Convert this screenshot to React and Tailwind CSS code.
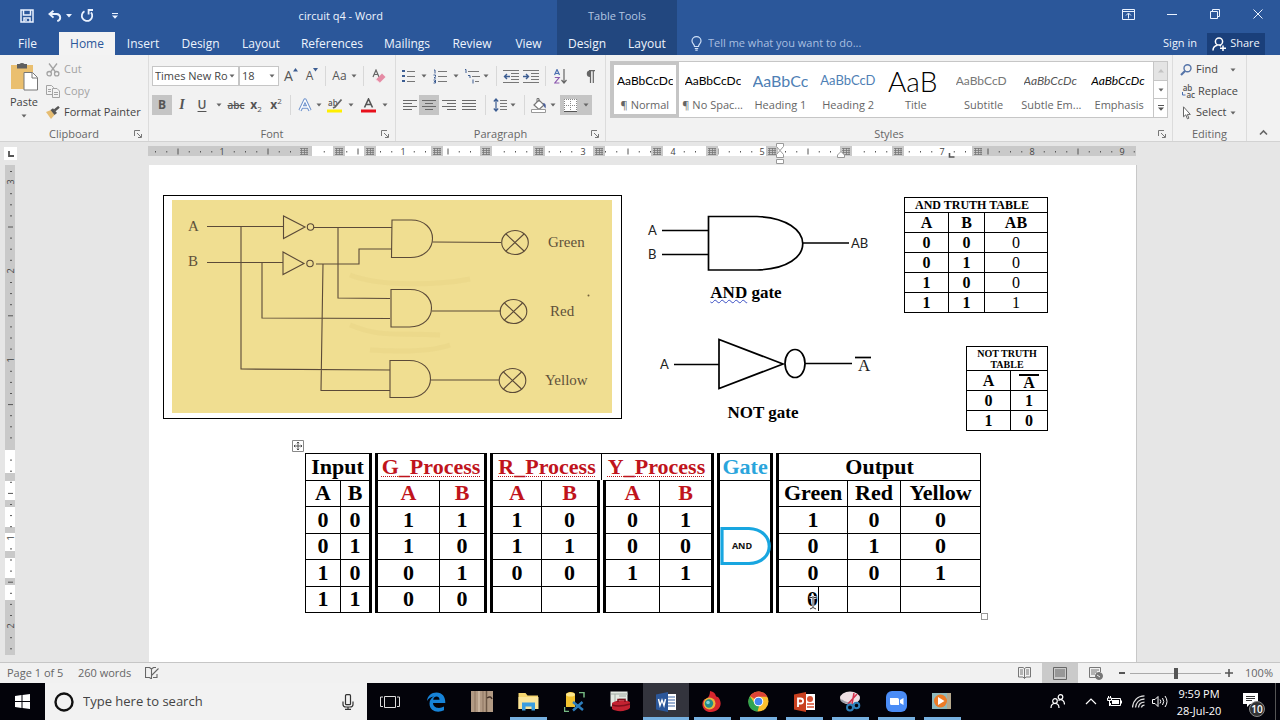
import React from "react";

const Arrow = ({ className = "" }) => (
  <svg className={"shrink-0 " + className} width="6" height="4" viewBox="0 0 6 4" aria-hidden="true">
    <path d="M0.5 0.5h5L3 3.4z" fill="#666" />
  </svg>
);

const Sep = ({ className = "mx-1" }) => <span className={"h-5 w-px shrink-0 bg-[#d8d8d8] " + className} />;

const Tool = ({ label, className = "w-5", children, on }) => (
  <button
    type="button"
    aria-label={label}
    className={"flex h-5 shrink-0 items-center justify-center " + (on ? "bg-[#c5c5c5] " : "") + className}
  >
    {children}
  </button>
);

const Drop = ({ label, className = "w-2" }) => (
  <Tool label={label} className={className}>
    <Arrow />
  </Tool>
);

const Lines = ({ rows, size = 14, color = "#6a6a6a" }) => (
  <svg width={size} height="13" viewBox="0 0 14 13" stroke={color} fill="none">
    {rows.map(([a, b], i) => (
      <path key={i} d={`M${a} ${i * 3 + 1.5}H${b}`} />
    ))}
  </svg>
);

const Launcher = ({ label }) => (
  <button type="button" aria-label={label} className="absolute right-1 flex h-3 w-3 items-center justify-center">
    <svg width="8" height="8" viewBox="0 0 8 8" fill="none" stroke="#777">
      <path d="M0.5 6V0.5H6M3 3l4 4M7.5 4v3.5H4" />
    </svg>
  </button>
);

const Group = ({ title, className, children, launcher }) => (
  <section aria-label={title} className={"flex shrink-0 flex-col border-r border-[#dcdcdc] " + className}>
    <div className="h-[72px]">{children}</div>
    <div className="relative flex h-[14px] items-center justify-center text-[11px] leading-[14px] text-[#666]">
      {title}
      {launcher && <Launcher label={title + " settings"} />}
    </div>
  </section>
);

const Tab = ({ className, children }) => (
  <a href="#" className={"flex h-[23px] shrink-0 items-center justify-center text-[12px] " + className}>
    {children}
  </a>
);

function Header() {
  return (
    <header className="flex h-[55px] shrink-0 bg-[#2b579a] text-[#eef4fd]">
      <div className="flex w-[557px] shrink-0 flex-col">
        <div className="flex h-8 items-center pl-[15px]">
          <button type="button" aria-label="Save" className="flex w-6 justify-center">
            <svg width="14" height="14" viewBox="0 0 14 14" fill="none" stroke="#eaf2ff" strokeWidth="1.5">
              <path d="M1 1h12v12H1zM3.5 1v5h7V1M4 13V9h6v4M6 10v2" />
            </svg>
          </button>
          <button type="button" aria-label="Undo" className="ml-2 flex w-4 justify-center">
            <svg width="14" height="12" viewBox="0 0 14 12" fill="none" stroke="#eaf2ff" strokeWidth="1.9">
              <path d="M5.5 0.8L1.5 4l4 3.6M2 4h6.5c4.5 0.3 5 5.6 0.8 7.2" />
            </svg>
          </button>
          <button type="button" aria-label="Undo list" className="flex w-3 justify-center">
            <svg width="6" height="4"><path d="M0 0h6L3 3.5z" fill="#eaf2ff" /></svg>
          </button>
          <button type="button" aria-label="Repeat" className="ml-1 flex w-4 justify-center">
            <svg width="14" height="14" viewBox="0 0 14 14" fill="none" stroke="#eaf2ff" strokeWidth="1.8">
              <path d="M4.5 2.2A5.2 5.2 0 1 0 11 3.4M13 1H8.6v4.6" />
            </svg>
          </button>
          <button type="button" aria-label="Customize toolbar" className="ml-3 flex w-4 justify-center">
            <svg width="6" height="6"><path d="M0 0h6v1H0zM0 2.5h6L3 5.8z" fill="#eaf2ff" /></svg>
          </button>
          <h1 className="ml-auto mr-[174px] text-[11px]">circuit q4 - Word</h1>
        </div>
        <nav aria-label="Ribbon tabs" className="flex">
          <Tab className="mr-1 w-[55px]">File</Tab>
          <Tab className="w-14 bg-[#f3f3f3] text-[#2b579a]">Home</Tab>
          <Tab className="w-14">Insert</Tab>
          <Tab className="w-[59px]">Design</Tab>
          <Tab className="w-[62px]">Layout</Tab>
          <Tab className="w-20">References</Tab>
          <Tab className="w-[70px]">Mailings</Tab>
          <Tab className="w-[60px]">Review</Tab>
          <Tab className="w-[53px]">View</Tab>
        </nav>
      </div>
      <div className="flex w-[120px] shrink-0 flex-col bg-[#22477f]">
        <div className="flex h-8 items-center justify-center text-[11px] text-[#b3c6e2]">Table Tools</div>
        <div className="flex">
          <Tab className="w-[60px]">Design</Tab>
          <Tab className="w-[60px]">Layout</Tab>
        </div>
      </div>
      <div className="flex min-w-0 flex-1 flex-col">
        <div className="flex h-8 items-center justify-end pb-1">
          <button type="button" aria-label="Ribbon display options" className="flex w-11 justify-center">
            <svg width="13" height="11" viewBox="0 0 13 11" fill="none" stroke="#eaf2ff">
              <path d="M0.5 0.5h12v10H0.5zM0.5 2.5h12M6.500 9.500V4.500M4 6.500L6.500 4l2.500 2.500" />
            </svg>
          </button>
          <button type="button" aria-label="Minimize" className="flex w-11 justify-center">
            <svg width="10" height="10"><path d="M0 5.500h10" stroke="#eaf2ff" /></svg>
          </button>
          <button type="button" aria-label="Restore" className="flex w-[42px] justify-center">
            <svg width="10" height="10" viewBox="0 0 10 10" fill="none" stroke="#eaf2ff">
              <path d="M0.500 2.500h7v7h-7zM2.500 2.500v-2h7v7h-2" />
            </svg>
          </button>
          <button type="button" aria-label="Close" className="flex w-[44px] justify-center">
            <svg width="10" height="10"><path d="M0.500 0.500l9 9M9.500 0.500l-9 9" stroke="#eaf2ff" /></svg>
          </button>
        </div>
        <div className="flex h-[23px] items-center pl-[14px] pr-[15px] text-[12px]">
          <svg width="11" height="15" viewBox="0 0 11 15" fill="none" stroke="#cfe0f7" strokeWidth="1.2">
            <path d="M3.500 10.500C3.500 8 1 7.500 1 4.900a4.500 4.300 0 0 1 9 0C10 7.500 7.500 8 7.500 10.500zM3.800 12.500h3.400M4.300 14.200h2.400" />
          </svg>
          <input
            aria-label="Tell me what you want to do"
            placeholder="Tell me what you want to do..."
            className="ml-[6px] w-52 bg-transparent text-[11px] outline-none placeholder:text-[#a9bfe0]"
          />
          <a href="#" className="ml-auto mr-[10px] text-[11px]">Sign in</a>
          <button type="button" className="flex h-[22px] w-[58px] items-center justify-center gap-1 bg-[#1a3f7a] text-[11px]">
            <svg width="14" height="14" viewBox="0 0 14 14" fill="none" stroke="#fff" strokeWidth="1.5">
              <circle cx="7" cy="4.500" r="3.600" />
              <path d="M1 13.500c0-3 1.800-4.700 4.500-5.200M7.500 8.200l1.500 1M11 8.500v5.500M8 11.200h6" />
            </svg>
            Share
          </button>
        </div>
      </div>
    </header>
  );
}

function Clipboard() {
  return (
    <div className="flex h-full pl-2">
      <button type="button" className="flex w-8 flex-col items-center pt-[7px] text-[11px] leading-4 text-[#444]">
        <svg width="28" height="29" viewBox="0 0 28 29">
          <path d="M1 3h22v24H1z" fill="#eabf6f" />
          <path d="M7 2h2.500a3 2.500 0 0 1 5 0H17v4.500H7z" fill="#5f5f5f" />
          <path d="M14 10.500h8.500l5 5V28H14z" fill="#fff" stroke="#777" />
          <path d="M22 11v5h5" fill="none" stroke="#777" />
        </svg>
        <span className="mt-[3px]">Paste</span>
        <Arrow className="mt-1" />
      </button>
      <div className="flex flex-col pl-[6px] pt-[4px] text-[11px]">
        <button type="button" className="flex h-[21px] items-center gap-[4px] text-[#a3a3a3]">
          <svg width="14" height="14" viewBox="0 0 14 14" fill="none" stroke="#a3a3a3" strokeWidth="1.300">
            <path d="M3 0.500l6.500 8.500M11 0.500L4.500 9" /><circle cx="3.200" cy="10.700" r="2.200" /><circle cx="10.700" cy="10.700" r="2.200" />
          </svg>
          Cut
        </button>
        <button type="button" className="flex h-[22px] items-center gap-[4px] text-[#a3a3a3]">
          <svg width="14" height="13" viewBox="0 0 14 13" fill="#f3f3f3" stroke="#a3a3a3">
            <path d="M0.500 0.500h5l2 2v7h-7zM2 4.500h3M2 6.500h3" /><path d="M6.500 3.500h4.500l2.500 2.500v6.500h-7zM8 7.500h4M8 9.500h4" />
          </svg>
          Copy
        </button>
        <button type="button" className="flex h-[21px] items-center gap-[4px] whitespace-nowrap text-[#444]">
          <svg width="14" height="13" viewBox="0 0 14 13">
            <path d="M0 6l5-2 3.500 5L5 13z" fill="#e6bd72" /><path d="M4.500 4L7 2.200l4 4.800-2.500 2z" fill="#555" /><path d="M8.500 4.500L13 0.800" stroke="#555" strokeWidth="2.400" />
          </svg>
          Format Painter
        </button>
      </div>
    </div>
  );
}

function FontTools() {
  return (
    <div className="pl-[3px] pt-[11px] text-[#555]">
      <div className="flex h-5 items-center">
        <label className="relative flex h-5 w-[87px] items-center">
          <select aria-label="Font" className="h-5 w-full appearance-none border border-[#c6c6c6] bg-white pl-[2px] text-[11px] leading-4 text-[#444]">
            <option>Times New Ro</option>
          </select>
          <Arrow className="pointer-events-none absolute right-1" />
        </label>
        <label className="relative flex h-5 w-[40px] items-center">
          <select aria-label="Font size" className="h-5 w-full appearance-none border border-[#c6c6c6] bg-white pl-[2px] text-[11px] leading-4 text-[#444]">
            <option>18</option>
          </select>
          <Arrow className="pointer-events-none absolute right-1" />
        </label>
        <Tool label="Grow font" className="w-6">
          <span className="text-[14px] leading-4">A</span>
          <svg className="mb-3" width="5" height="4"><path d="M0 3.500L2.500 0 5 3.500z" fill="#3c5d92" /></svg>
        </Tool>
        <Tool label="Shrink font" className="w-[18px]">
          <span className="text-[12px] leading-4">A</span>
          <svg className="mb-3" width="5" height="4"><path d="M0 0h5L2.500 3.500z" fill="#3c5d92" /></svg>
        </Tool>
        <Sep />
        <Tool label="Change case" className="w-[29px] gap-1">
          <span className="text-[12px] leading-4">Aa</span>
          <Arrow />
        </Tool>
        <Sep />
        <Tool label="Clear formatting" className="w-[22px]">
          <svg width="14" height="14" viewBox="0 0 14 14">
            <path d="M1 8L4 1l3 7M2.200 5.500h3.600" fill="none" stroke="#666" strokeWidth="1.200" />
            <path d="M4 10.500L10 4.500l3.500 3.500L8 13.500z" fill="#e58ba4" /><path d="M3.500 10L8 13.800" stroke="#f6c9d5" />
          </svg>
        </Tool>
      </div>
      <div className="mt-[9px] flex h-5 items-center text-[12px] leading-4">
        <Tool label="Bold" on><b>B</b></Tool>
        <Tool label="Italic"><i className="font-['Liberation_Serif',serif] text-[14px] font-bold">I</i></Tool>
        <Tool label="Underline"><span className="font-semibold underline underline-offset-2">U</span></Tool>
        <Drop label="Underline style" className="w-[14px]" />
        <Tool label="Strikethrough"><s className="text-[10px] font-semibold">abc</s></Tool>
        <Tool label="Subscript"><b>x</b><span className="mt-2 text-[8px]">2</span></Tool>
        <Tool label="Superscript"><b>x</b><span className="mb-2 text-[8px]">2</span></Tool>
        <Sep />
        <Tool label="Text effects">
          <svg width="14" height="14" viewBox="0 0 14 14" fill="none" strokeLinejoin="round">
            <path d="M2 12.500L7 2l5 10.500M4 9h6" stroke="#6f93cd" strokeWidth="3.400" /><path d="M2 12.500L7 2l5 10.500M4 9h6" stroke="#fff" strokeWidth="1.400" />
          </svg>
        </Tool>
        <Drop label="Text effects list" />
        <Tool label="Highlight" className="w-6">
          <svg width="16" height="15" viewBox="0 0 16 15">
            <text x="1" y="8" fontSize="8" fontWeight="600" fill="#555">ab</text>
            <path d="M14.500 1.500L8 9l-2 1" stroke="#666" strokeWidth="1.800" fill="none" /><path d="M0 11.500h15v3H0z" fill="#ffef00" />
          </svg>
        </Tool>
        <Drop label="Highlight colours" />
        <Tool label="Font color" className="w-[26px]">
          <svg width="15" height="15" viewBox="0 0 15 15">
            <path d="M3.500 9.500L7.500 1l4 8.500M5 6.500h5" stroke="#555" strokeWidth="1.600" fill="none" /><path d="M0 11.500h15v3H0z" fill="#e8101c" />
          </svg>
        </Tool>
        <Drop label="Font colours" />
      </div>
    </div>
  );
}

function ParagraphTools() {
  return (
    <div className="pl-1 pt-[11px]">
      <div className="flex h-5 items-center">
        <Tool label="Bullets" className="w-4">
          <svg width="13" height="14" viewBox="0 0 13 14"><path d="M0 1h3v2H0zM0 6h3v2H0zM0 11h3v2H0z" fill="#3c5d92" /><path d="M5 2.500h8M5 7.500h8M5 12.500h8" stroke="#777" /></svg>
        </Tool>
        <Drop label="Bullet library" className="w-4" />
        <Tool label="Numbering" className="w-4">
          <svg width="14" height="15" viewBox="0 0 14 15"><path d="M1 1h1v3.500M0.500 6h2v1.500L1 9h2M0.500 11h2v3h-2M1 12.500h1.500" fill="none" stroke="#3c5d92" /><path d="M5 2.500h9M5 7.500h9M5 12.500h9" stroke="#777" /></svg>
        </Tool>
        <Drop label="Numbering library" className="w-4" />
        <Tool label="Multilevel list" className="w-4">
          <svg width="16" height="15" viewBox="0 0 16 15"><path d="M1 0.500h1V4M4 6.500h2V9M9 10.500v4" fill="none" stroke="#3c5d92" /><path d="M4 2.500h11M8 7.500h8M11 12.500h4" stroke="#777" /></svg>
        </Tool>
        <Drop label="List library" className="w-3" />
        <Sep />
        <Tool label="Decrease indent">
          <svg width="16" height="13" viewBox="0 0 16 13"><path d="M0 0.500h16M8 3.500h8M8 6.500h8M8 9.500h8M0 12.500h16" stroke="#777" /><path d="M7 6.500H1.500M4 4L1.500 6.500 4 9" stroke="#3c5d92" strokeWidth="1.400" fill="none" /></svg>
        </Tool>
        <Tool label="Increase indent">
          <svg width="16" height="13" viewBox="0 0 16 13"><path d="M0 0.500h16M8 3.500h8M8 6.500h8M8 9.500h8M0 12.500h16" stroke="#777" /><path d="M0 6.500h5.500M3 4l2.500 2.500L3 9" stroke="#3c5d92" strokeWidth="1.400" fill="none" /></svg>
        </Tool>
        <Sep />
        <Tool label="Sort" className="w-[22px]">
          <svg width="14" height="15" viewBox="0 0 14 15" fill="none"><path d="M0.500 6L3 0.500 5.500 6M1.500 4.500h3" stroke="#4a6fb0" strokeWidth="1.200" /><path d="M0.800 8.500h4.400L0.800 14h4.600" stroke="#8d5bb0" strokeWidth="1.200" /><path d="M10 0v13.500M7.500 11l2.500 3 2.500-3" stroke="#666" strokeWidth="1.200" /></svg>
        </Tool>
        <Tool label="Show marks" className="ml-2 w-5">
          <svg width="10" height="13" viewBox="0 0 10 13"><path d="M5 0.500a3.200 3.200 0 0 0 0 6.400z" fill="#666" /><path d="M4 0.700h6M5.500 0.500V13M8.300 0.500V13" stroke="#666" strokeWidth="1.200" /></svg>
        </Tool>
      </div>
      <div className="mt-[9px] flex h-5 items-center">
        <Tool label="Align left" className="w-[19px]"><Lines rows={[[0, 14], [0, 9], [0, 14], [0, 9]]} /></Tool>
        <Tool label="Center" on><Lines rows={[[0, 14], [3, 11], [0, 14], [3, 11]]} /></Tool>
        <Tool label="Align right"><Lines rows={[[0, 14], [5, 14], [0, 14], [5, 14]]} /></Tool>
        <Tool label="Justify"><Lines rows={[[0, 14], [0, 14], [0, 14], [0, 14]]} /></Tool>
        <Sep className="mx-1.5" />
        <Tool label="Line spacing" className="w-4">
          <svg width="14" height="14" viewBox="0 0 14 14" fill="none"><path d="M3 1v12M0.800 3.500L3 1l2.200 2.500M0.800 10.500L3 13l2.200-2.500" stroke="#3c5d92" strokeWidth="1.200" /><path d="M7 2.500h7M7 5.500h7M7 8.500h7M7 11.500h7" stroke="#777" /></svg>
        </Tool>
        <Drop label="Spacing options" className="w-2.5" />
        <Sep className="mx-1.5" />
        <Tool label="Shading" className="w-4">
          <svg width="16" height="15" viewBox="0 0 16 15"><path d="M3 7l5-5 5 5-5 4.500z" fill="#fff" stroke="#777" strokeWidth="1.200" /><path d="M6 4V0.500h2V4" fill="none" stroke="#777" /><path d="M12 5c3 0 3 3 2.500 5.500C13 9 12.500 7.500 12 5z" fill="#4a5f9a" /><path d="M0.500 11.500h14v3H0.500z" fill="#fff" stroke="#999" /></svg>
        </Tool>
        <Drop label="Shading colours" className="mr-px w-3" />
        <Tool label="Borders" on className="w-8 gap-[6px]">
          <svg width="13" height="13" viewBox="0 0 13 13"><path d="M0 0h13v13H0z" fill="#fff" /><path d="M0.500 0v12M6.500 0v12M12.500 0v12M0 0.500h12M0 6.500h12" stroke="#888" strokeDasharray="1 1" /><path d="M0 12.500h13" stroke="#555" /></svg>
          <Arrow />
        </Tool>
      </div>
    </div>
  );
}

const STYLES = [
  ["AaBbCcDc", "¶ Normal", "text-[12px] text-black"],
  ["AaBbCcDc", "¶ No Spac...", "text-[12px] text-black"],
  ["AaBbCc", "Heading 1", "text-[16px] text-[#4f7fb5]"],
  ["AaBbCcD", "Heading 2", "text-[13px] text-[#4f7fb5]"],
  ["AaB", "Title", "text-[28px] font-light text-black"],
  ["AaBbCcD", "Subtitle", "text-[12px] text-[#777]"],
  ["AaBbCcDc", "Subtle Em...", "text-[12px] italic text-[#555]"],
  ["AaBbCcDc", "Emphasis", "text-[12px] italic text-black"],
];

function StyleGallery() {
  return (
    <div className="mx-1 mt-[6px] flex h-[57px] border border-[#c6c6c6] bg-white">
      <div className="grid min-w-0 flex-1 grid-cols-8">
        {STYLES.map(([sample, name, look], i) => (
          <button
            type="button"
            key={name}
            className={"flex min-w-0 flex-col border-[3px] px-[3px] " + (i === 0 ? "border-[#c5c5c5]" : "border-transparent")}
          >
            <span className={"mt-1 flex h-[24px] w-full items-center overflow-hidden font-['Lato','Open_Sans',sans-serif] whitespace-nowrap " + look}>{sample}</span>
            <span className="mt-1 flex w-full justify-center text-[11px] leading-4 whitespace-nowrap text-[#666]">{name}</span>
          </button>
        ))}
      </div>
      <div className="flex w-[14px] flex-col divide-y divide-[#c6c6c6] border-l border-[#c6c6c6]">
        <button type="button" aria-label="Scroll styles up" className="flex flex-1 items-center justify-center bg-[#e4e4e4]">
          <svg width="6" height="4"><path d="M0 3.500h6L3 0z" fill="#c2c2c2" /></svg>
        </button>
        <button type="button" aria-label="Scroll styles down" className="flex flex-1 items-center justify-center"><Arrow /></button>
        <button type="button" aria-label="More styles" className="flex flex-1 items-center justify-center">
          <svg width="6" height="6"><path d="M0 0h6v1H0zM0 2.500h6L3 5.800z" fill="#555" /></svg>
        </button>
      </div>
    </div>
  );
}

function Editing() {
  return (
    <div className="flex flex-col pl-[7px] pt-[4px] text-[11px] text-[#444]">
      <button type="button" className="flex h-[21px] items-center gap-1">
        <svg width="12" height="12" viewBox="0 0 12 12" fill="none"><circle cx="7.500" cy="4.300" r="3.500" stroke="#5574a8" strokeWidth="1.400" /><path d="M5 7L1 11" stroke="#5574a8" strokeWidth="2.200" /></svg>
        <span>Find</span>
        <Arrow className="ml-2" />
      </button>
      <button type="button" className="flex h-[22px] items-center gap-[3px]">
        <span className="flex w-[15px] flex-col text-[8px] leading-[7px] font-semibold text-[#555]">
          <span>ab</span>
          <span className="flex items-center justify-end">
            <svg width="4" height="5" viewBox="0 0 4 5"><path d="M0.500 0v3h3" stroke="#4a6fb0" fill="none" /></svg>
            ac
          </span>
        </span>
        Replace
      </button>
      <button type="button" className="flex h-[21px] items-center gap-1">
        <svg width="12" height="14" viewBox="0 0 12 14"><path d="M3.500 0.800v10l2.300-2 1.600 4 1.500-0.600-1.600-3.800h3z" fill="#fff" stroke="#666" /></svg>
        Select
        <Arrow />
      </button>
    </div>
  );
}

function Ribbon() {
  return (
    <div className="flex h-[87px] shrink-0 border-b border-[#d2d2d2] bg-[#f2f2f2]">
      <Group title="Clipboard" className="w-[149px]" launcher><Clipboard /></Group>
      <Group title="Font" className="w-[247px]" launcher><FontTools /></Group>
      <Group title="Paragraph" className="w-[210px]" launcher><ParagraphTools /></Group>
      <Group title="Styles" className="min-w-[560px] flex-1" launcher><StyleGallery /></Group>
      <Group title="Editing" className="w-[74px]"><Editing /></Group>
      <div className="flex w-[33px] shrink-0 items-end justify-center pb-1">
        <button type="button" aria-label="Collapse ribbon">
          <svg width="9" height="9" viewBox="0 0 9 9"><path d="M1 6.500l3.500-3.500L8 6.500" stroke="#666" strokeWidth="1.600" fill="none" /></svg>
        </button>
      </div>
    </div>
  );
}

const COLUMN_MARKS = [304, 339, 370, 437, 486, 539, 599, 657, 712, 772, 846, 898, 978];
const RULER_NUMBERS = [[222, "1"], [403, "1"], [583, "3"], [673, "4"], [762, "5"], [942, "7"], [1032, "8"], [1122, "9"]];

function HorizontalRuler() {
  const ticks = [];
  for (let i = -14; i <= 73; i++) {
    if (i % 8 === 0) continue;
    const x = 313 + i * 11.25;
    if (COLUMN_MARKS.some((c) => Math.abs(c - x) < 6)) continue;
    ticks.push(<path key={i} d={i % 4 === 0 ? `M${x} 149.500v6` : `M${x} 152v1.500`} />);
  }
  return (
    <svg width="988" height="22" viewBox="148 143 988 22" className="block" aria-label="Ruler">
      <path d="M148 147h988v10H148z" fill="#fff" />
      <path d="M148 147h164v10H148zM972 147h164v10H972z" fill="#c9c9c9" />
      <g stroke="#555">{ticks}</g>
      {COLUMN_MARKS.map((c) => (
        <g key={c}>
          <path d={`M${c - 6} 147h12v10h-12z`} fill="#c9c9c9" />
          <path d={`M${c - 4} 149.500h8M${c - 4} 151.500h8M${c - 4} 153.500h8M${c - 4} 155.500h8M${c - 2.5} 149v7M${c + 0.5} 149v7M${c + 3} 149v7`} stroke="#777" strokeWidth="0.800" />
        </g>
      ))}
      <g fontSize="9" fill="#444" textAnchor="middle">
        {RULER_NUMBERS.map(([x, n]) => <text key={x} x={x} y="155.500">{n}</text>)}
      </g>
      <g fill="#fff" stroke="#999">
        <path d="M776.500 144.500h7v3l-3.500 4 3.500 4v3h-7v-3l3.500-4-3.500-4zM776.500 160.500h7v4h-7zM841 152.500l3.500 3.500v2.500h-7V156z" />
      </g>
      <path d="M949.500 154v4h5" fill="none" stroke="#555" strokeWidth="1.600" />
    </svg>
  );
}

function VerticalRuler() {
  const ticks = [];
  for (let i = -25; i <= 18; i++) {
    if (i % 8 === 0) continue;
    const y = 449 + i * 11.1;
    ticks.push(<path key={i} d={i % 4 === 0 ? `M8 ${y}h5` : `M10 ${y}h2`} />);
  }
  return (
    <svg width="16" height="490" viewBox="0 165 16 490" aria-label="Vertical ruler">
      <path d="M5 165h10v490H5z" fill="#c9c9c9" />
      <path d="M5 450h10v23H5zM5 481h10v19H5zM5 507h10v20H5zM5 533h10v18H5zM5 558h10v20H5zM5 585h10v15H5z" fill="#fff" />
      <g stroke="#555">{ticks}</g>
      <g fontSize="9" fill="#444" textAnchor="middle">
        {[[182, "3"], [271, "2"], [360, "1"], [538, "1"], [626, "2"]].map(([y, n]) => (
          <text key={y} transform={`translate(13.500 ${y}) rotate(-90)`}>{n}</text>
        ))}
      </g>
    </svg>
  );
}

const Lamp = ({ x, y }) => (
  <g>
    <ellipse cx={x} cy={y} rx="13.300" ry="12" />
    <path d={`M${x - 9} ${y - 8.5}l18 17M${x + 9} ${y - 8.5}l-18 17`} />
  </g>
);

function Circuit() {
  return (
    <figure className="h-[224px] w-[459px] shrink-0 border border-black bg-white px-2 py-[4px]">
      <svg width="441" height="214" viewBox="172 200 441 214" fill="none" aria-label="Traffic light logic circuit">
        <path d="M172 200h440v213H172z" fill="#f0de91" />
        <path d="M350 275c30 12 90 10 120 4M350 325c30 12 40 8 90 10M370 350c30 2 60 2 80-5" stroke="#dfca7d" strokeWidth="5" opacity="0.250" />
        <g stroke="#5b4a38" strokeWidth="1.100">
          <path d="M207 226.500h76M207 262.500h76M241 227v142L390 370M262 263v55l128 0.500M314 227.500h78M338 228v70l52 0.500M316 264h43v-15h33M323 264l-2 126.500h69" />
          <path d="M283.500 216v22.500L305 227zM283 252v22.500L304 263.500z" />
          <circle cx="310.500" cy="227" r="3.200" /><circle cx="310" cy="263.500" r="3.200" />
          <path d="M392 220h18c30-1 30 38 0 37.500h-18.500zM391 289.500h18c30-1 30 38 0 37.500h-18zM390 360.500h18c30-1 30 37.500 0 37h-18z" />
          <path d="M432.500 242L501 242.500M432 311h69M431 380h68" />
          <Lamp x={515} y={242.500} /><Lamp x={513.500} y={311.500} /><Lamp x={512.500} y={380.500} />
        </g>
        <circle cx="588.500" cy="295.500" r="1" fill="#75633c" />
        <g fill="#5f513a" fontSize="15" className="font-['Liberation_Serif',serif]">
          <text x="188" y="231">A</text><text x="188" y="266">B</text>
          <text x="548" y="247">Green</text><text x="550" y="316">Red</text><text x="545" y="385">Yellow</text>
        </g>
      </svg>
    </figure>
  );
}

function Gates() {
  return (
    <div className="w-[240px] shrink-0 pt-[10px]">
      <figure>
        <svg width="240" height="75" viewBox="640 205 240 75" fill="none" stroke="#000" strokeWidth="1.700" className="block">
          <path d="M708.500 216.500H757c60 2 62 52 0 53.500h-48.500zM662 230.500h46M662 254.500h46M803 243h46" />
          <g fill="#222" stroke="none" fontSize="13" className="font-['Lato',sans-serif]">
            <text x="648" y="235">A</text><text x="648" y="259">B</text><text x="851" y="248">AB</text>
          </g>
        </svg>
        <figcaption className="mt-1 pr-[28px] text-center text-[17px] leading-[18px] font-bold">
          <span className="underline decoration-[#3b4fc4] decoration-wavy decoration-1 underline-offset-1">AND</span> gate
        </figcaption>
      </figure>
      <figure className="mt-[33px]">
        <svg width="240" height="60" viewBox="640 335 240 60" fill="none" stroke="#000" strokeWidth="1.700" className="block">
          <path d="M719 339.500v49l64-24.500zM674 364.500h45M805 363.500h47" />
          <ellipse cx="795" cy="363.500" rx="10" ry="14" />
          <path d="M855 357.500h16" />
          <g fill="#222" stroke="none">
            <text x="660" y="369" fontSize="13" className="font-['Lato',sans-serif]">A</text>
            <text x="858" y="371" fontSize="17">A</text>
          </g>
        </svg>
        <figcaption className="mt-[9px] pl-[6px] text-center text-[17px] leading-[18px] font-bold">NOT gate</figcaption>
      </figure>
    </div>
  );
}

const cell = "border border-black p-0 text-center";

function TruthTables() {
  return (
    <div className="flex w-[144px] shrink-0 flex-col items-end pt-[2px]">
      <table className="h-[115px] w-[143px] table-fixed border-collapse text-[16px] leading-[18px] font-bold">
        <colgroup><col className="w-[44px]" /><col className="w-[36px]" /><col className="w-[63px]" /></colgroup>
        <thead>
          <tr className="h-[15px]"><th colSpan={3} className={cell + " pr-2 text-[12px] leading-[13px] whitespace-nowrap"}>AND TRUTH TABLE</th></tr>
          <tr className="h-5">{["A", "B", "AB"].map((t) => <th key={t} className={cell}>{t}</th>)}</tr>
        </thead>
        <tbody>
          {["000", "010", "100", "111"].map((r) => (
            <tr key={r} className="h-5">
              <td className={cell}>{r[0]}</td><td className={cell}>{r[1]}</td><td className={cell + " font-normal"}>{r[2]}</td>
            </tr>
          ))}
        </tbody>
      </table>
      <table className="mt-[33px] h-[84px] w-[81px] table-fixed border-collapse text-[16px] leading-[18px] font-bold">
        <colgroup><col className="w-[44px]" /><col className="w-[37px]" /></colgroup>
        <thead>
          <tr className="h-6"><th colSpan={2} className={cell + " text-[10px] leading-[11px]"}>NOT TRUTH<br />TABLE</th></tr>
          <tr className="h-5"><th className={cell}>A</th><th className={cell}><span className="mx-auto mt-[2px] block w-5 border-t-2 border-black leading-[14px]">A</span></th></tr>
        </thead>
        <tbody>
          <tr className="h-5"><td className={cell}>0</td><td className={cell}>1</td></tr>
          <tr className="h-5"><td className={cell}>1</td><td className={cell}>0</td></tr>
        </tbody>
      </table>
    </div>
  );
}

const ROWS = [
  ["0", "0", "1", "1", "1", "0", "0", "1", "1", "0", "0"],
  ["0", "1", "1", "0", "1", "1", "0", "0", "0", "1", "0"],
  ["1", "0", "0", "1", "0", "0", "1", "1", "0", "0", "1"],
  ["1", "1", "0", "0", "", "", "", "", "0", "", ""],
];
const HEADS = ["A", "B", "A", "B", "A", "B", "A", "B", "Green", "Red", "Yellow"];
const thick = " border-l-[9px] [border-left-style:double]";
const thickAt = (i) => (i === 2 || i === 4 || i === 6 || i === 8 ? thick : "");

const Process = ({ children, className = "" }) => (
  <th colSpan={2} className={cell + " text-[#c0141c] " + className}>
    <span className="underline decoration-[#c0141c] decoration-dotted decoration-1 underline-offset-2">{children}</span>
  </th>
);

const GateCell = () => (
  <td rowSpan={5} className={cell + thick}>
    <svg width="52" height="40" viewBox="0 0 52 40" className="mx-auto block">
      <path d="M2 2.500h27c27 1 27 34.500 0 35H2z" fill="#fff" stroke="#18a6e0" strokeWidth="3.200" />
      <text x="22" y="23" textAnchor="middle" fontSize="9" fontWeight="700" fill="#111" className="font-['Open_Sans',sans-serif]">AND</text>
    </svg>
  </td>
);

function OutputTable() {
  return (
    <div className="relative mx-auto mt-[22px] w-[675px]">
      <svg className="absolute -top-[13px] -left-[13px]" width="12" height="12" viewBox="0 0 12 12" fill="#fff" stroke="#888">
        <path d="M0.500 0.500h11v11H0.500z" />
        <path d="M6 2v8M2 6h8M4.800 3.200L6 2l1.200 1.200M4.800 8.800L6 10l1.200-1.200M3.200 4.800L2 6l1.200 1.200M8.800 4.800L10 6 8.800 7.200" fill="none" stroke="#444" strokeWidth="0.900" />
      </svg>
      <table className="h-[160px] w-full table-fixed border-collapse text-[22px] leading-[24px] font-bold">
        <colgroup>
          <col className="w-[35px]" /><col className="w-[33px]" /><col className="w-[66px]" /><col className="w-[49px]" />
          <col className="w-[53px]" /><col className="w-[60px]" /><col className="w-[58px]" /><col className="w-[56px]" />
          <col className="w-[59px]" /><col className="w-[73px]" /><col className="w-[53px]" /><col className="w-[80px]" />
        </colgroup>
        <tbody>
          <tr>
            <th colSpan={2} className={cell}>Input</th>
            <Process className={thick}>G_Process</Process>
            <Process className={thick}>R_Process</Process>
            <Process>Y_Process</Process>
            <th className={cell + thick + " text-[#2aa5dc]"}>Gate</th>
            <th colSpan={3} className={cell + thick}>Output</th>
          </tr>
          <tr>
            {HEADS.map((h, i) => (
              <React.Fragment key={i}>
                {i === 8 && <GateCell />}
                <th className={cell + thickAt(i) + (i > 1 && i < 8 ? " text-[#c0141c]" : "")}>{h}</th>
              </React.Fragment>
            ))}
          </tr>
          {ROWS.map((row, r) => (
            <tr key={r}>
              {row.map((v, i) => (
                <td key={i} className={cell + thickAt(i)}>
                  {r === 3 && i === 8 ? (
                    <span className="relative inline-block border-r border-black">
                      {v}
                      <svg className="absolute top-1 left-0" width="11" height="20" viewBox="0 0 11 20" fill="none">
                        <path d="M2.500 6.500h2.500l1-1 1 1h2.500M6 6v10M3 18l3-1.500L9 18" stroke="#fff" strokeWidth="2.500" />
                        <path d="M2.500 6.500h2.500l1-1 1 1h2.500M6 6v10M3 18l3-1.500L9 18" stroke="#333" />
                      </svg>
                    </span>
                  ) : v}
                </td>
              ))}
            </tr>
          ))}
        </tbody>
      </table>
      <span className="absolute -right-[8px] -bottom-[7px] h-[7px] w-[7px] border border-[#999] bg-white" />
    </div>
  );
}

function StatusBar() {
  return (
    <footer className="flex h-[21px] shrink-0 items-center border-t border-[#c6c6c6] bg-[#f1f1f1] pl-[7px] text-[11px] text-[#666]">
      <span className="w-[71px]">Page 1 of 5</span>
      <span className="w-[67px]">260 words</span>
      <button type="button" aria-label="Proofing">
        <svg width="15" height="12" viewBox="0 0 15 12" fill="none" stroke="#666"><path d="M6.500 2L4.500 0.500h-4v10h4l2 1.500V2l2-1.500H11M8 10.500h4V7M7 8l6.500-6.500" strokeWidth="1.100" /></svg>
      </button>
      <div className="ml-auto flex items-center">
        <button type="button" aria-label="Read mode" className="flex w-9 justify-center">
          <svg width="13" height="12" viewBox="0 0 13 12" fill="none" stroke="#777"><path d="M6.500 1.500L5 0.500H0.500v9.500H5l1.500 1.500L8 10h4.500V0.500H8zV11.500M2 3h3M2 5h3M2 7h3M8 3h3M8 5h3M8 7h3" /></svg>
        </button>
        <button type="button" aria-label="Print layout" className="flex h-5 w-9 items-center justify-center bg-[#cacaca]">
          <svg width="14" height="13" viewBox="0 0 14 13" fill="none" stroke="#666"><path d="M0.500 0.500h13v12H0.500zM2 3h10M2 5h10M2 7h10M2 9h10" /></svg>
        </button>
        <button type="button" aria-label="Web layout" className="flex w-9 justify-center">
          <svg width="14" height="13" viewBox="0 0 14 13" fill="none" stroke="#777"><path d="M7 10.500H0.500v-10h11V5M2 3h8M2 5h6M2 7h4" /><circle cx="10" cy="9" r="3.500" fill="#777" /><path d="M8 8l3 2" stroke="#eee" /></svg>
        </button>
        <button type="button" aria-label="Zoom out" className="flex w-4 justify-center"><svg width="6" height="2"><path d="M0 1h6" stroke="#555" strokeWidth="2" /></svg></button>
        <input
          type="range"
          aria-label="Zoom"
          min="0"
          max="200"
          defaultValue="100"
          className="h-3 w-[91px] appearance-none bg-transparent [&::-webkit-slider-runnable-track]:h-px [&::-webkit-slider-runnable-track]:bg-[#aaa] [&::-webkit-slider-thumb]:-mt-[5px] [&::-webkit-slider-thumb]:h-[11px] [&::-webkit-slider-thumb]:w-1 [&::-webkit-slider-thumb]:appearance-none [&::-webkit-slider-thumb]:bg-[#555]"
        />
        <button type="button" aria-label="Zoom in" className="flex w-4 justify-center"><svg width="8" height="8"><path d="M0 4h8M4 0v8" stroke="#555" strokeWidth="1.600" /></svg></button>
        <span className="w-[43px] pr-[7px] text-right text-[11px]">100%</span>
      </div>
    </footer>
  );
}

const APPS = [
  ["Task view", "", <svg width="20" height="14" viewBox="0 0 20 14" fill="none" stroke="#ddd"><path d="M4.500 1.500h11v11h-11zM3 2H0.500v9.500H3M17 2h2.500v9.500H17" /></svg>],
  ["Edge", "", <svg width="20" height="20" viewBox="0 0 20 20"><path d="M1 9C1.500 3.500 5.500 0.500 10.500 0.500c6 0 9 4.500 8.800 10.500H7c.3 5.500 7 6 11 3.500v3.800c-6 3-14.500 1.200-14.500-6.800 0-3.500 2-5.800 4.500-7C4.500 5 2.500 6.500 1 9zM7.200 7.800h6.300c0-4.300-5.800-4.200-6.300 0z" fill="#1683d8" /></svg>],
  ["Wood", "", <svg width="22" height="21" viewBox="0 0 22 21"><path d="M0 0h22v21H0z" fill="#b29a84" /><path d="M4 0v21M12 0v21" stroke="#8d7460" /><path d="M8 0v21" stroke="#c9b49f" strokeWidth="2" /><path d="M15.500 0v21" stroke="#6d5847" strokeWidth="1.500" /><path d="M16 7c3-2 4-1 5 1" stroke="#443229" fill="none" strokeWidth="1.500" /></svg>],
  ["File Explorer", "w-[37px]", <svg width="21" height="19" viewBox="0 0 21 19"><path d="M0.500 1h7l2 2.500H20V17H0.500z" fill="#f6d66f" /><path d="M0.500 5h20v12H0.500z" fill="#fbe59a" /><path d="M4 18.500V10.500h13v8h-3.500v-4h-6v4z" fill="#3b9ee0" /></svg>],
  ["Database tools", "", <svg width="21" height="20" viewBox="0 0 21 20"><path d="M2 2c3-3 8-2 9 0v13H2z" fill="#f1c12f" /><ellipse cx="6.500" cy="2.500" rx="4.500" ry="2" fill="#fde68a" /><path d="M15 0.500h5v5M0.500 15v4.500H5" stroke="#76b983" strokeWidth="1.500" fill="none" /><path d="M9 10l10 8M18.500 10L9 18.500" stroke="#2d7ebd" strokeWidth="2.500" /></svg>],
  ["Toolbox", "", <svg width="21" height="21" viewBox="0 0 21 21"><path d="M0.500 0.500h17v15h-17z" fill="#e4e9e2" /><path d="M1 3h17M5 3v11M9 5h7M9 8h7" stroke="#a2aca5" /><path d="M2 12c3-3 14-4 18-1v6c-4 4-14 4-18 1z" fill="#c32231" /><path d="M8 11V8.500h7V11M2 14c6 2 12 1 18-1" stroke="#7e0f1b" fill="none" strokeWidth="1.500" /></svg>],
  ["Word", "w-[46px]", <svg width="20" height="20" viewBox="0 0 20 20"><path d="M9 2h11v16H9z" fill="#fff" /><path d="M12 5h7M12 8h7M12 11h7M12 14h7" stroke="#3a64a5" strokeWidth="1.200" /><path d="M0 2.500L12 0v20L0 17.500z" fill="#2b579a" /><path d="M2.500 7l1.500 6.500L6 8l2 5.500L9.500 7" stroke="#fff" strokeWidth="1.400" fill="none" /></svg>],
  ["Flame recorder", "w-[37px]", <svg width="20" height="21" viewBox="0 0 20 21"><path d="M8 0c8 2 4 6 8 6 6 7 1 15-7 15-7 0-10-6-8-11 2-3 7-2 7-10z" fill="#d8262e" /><circle cx="7.500" cy="12.500" r="6" fill="#e9b53c" /><circle cx="7" cy="12.500" r="4.200" fill="#238c8b" /><circle cx="6" cy="11.500" r="1.800" fill="#80d3d9" /></svg>],
  ["Chrome", "w-[37px]", <svg width="21" height="21" viewBox="0 0 21 21"><circle cx="10.500" cy="10.500" r="10" fill="#fbc02e" /><path d="M10.500 10.500L2 5C6-1.500 16-1 19.500 5.800H10z" fill="#dd4437" /><path d="M1.800 5.300l5.600 8 3.600 2-1.500 5.200C1.500 20-2 12 1.800 5.300z" fill="#30a450" /><circle cx="10.500" cy="10.500" r="4.800" fill="#fff" /><circle cx="10.500" cy="10.500" r="3.800" fill="#4386ee" /></svg>],
  ["PowerPoint", "w-[37px]", <svg width="21" height="20" viewBox="0 0 21 20"><path d="M9 2h12v16H9z" fill="#fff" /><circle cx="16" cy="7" r="3" fill="#d65032" /><path d="M13 12h7M13 15h7" stroke="#d65032" strokeWidth="1.500" /><path d="M0 2.500L12 0v20L0 17.500z" fill="#c9401f" /><path d="M4 15V6.500h2.500c3.500 0 3.500 5 0 5H4" stroke="#fff" strokeWidth="1.800" fill="none" /></svg>],
  ["Snipping Tool", "w-[37px]", <svg width="22" height="21" viewBox="0 0 22 21"><ellipse cx="11" cy="7" rx="10" ry="6.500" fill="#eedfe4" /><path d="M2 9c4 4 9 3 10 2" stroke="#9b9da8" strokeWidth="2" fill="none" /><path d="M9 13l9-10M13 13l2-11" stroke="#d2304c" strokeWidth="1.500" /><circle cx="11" cy="16.500" r="3" fill="none" stroke="#2e7fb8" strokeWidth="2" /><circle cx="17.500" cy="14.500" r="2.800" fill="none" stroke="#2e7fb8" strokeWidth="2" /></svg>],
  ["Zoom", "w-[37px]", <svg width="21" height="21" viewBox="0 0 21 21"><rect width="21" height="21" rx="6" fill="#4a8cf6" /><path d="M4 7h7.500q1.500 0 1.500 1.500V14H5.500Q4 14 4 12.500zM14 9l3.500-2v7L14 12z" fill="#fff" /></svg>],
  ["Media Player", "w-[37px]", <svg width="20" height="19" viewBox="0 0 20 19"><path d="M0 1h15v16H0z" fill="#8fb9bd" /><path d="M15 1h4v16h-4z" fill="#b6a98d" /><circle cx="8.500" cy="9" r="6.500" fill="#ed7b26" /><path d="M6 5l6.500 4L6 13z" fill="#fff" /></svg>],
];

function Taskbar() {
  return (
    <nav aria-label="Taskbar" className="flex h-[37px] shrink-0 bg-[#03030a] text-white">
      <button type="button" aria-label="Start" className="flex w-[45px] items-center justify-center">
        <svg width="15" height="15" viewBox="0 0 15 15" fill="#fff"><path d="M0 2l6.500-1v6H0zM7.500 0.900L15 0v7H7.500zM0 8h6.500v6L0 13zM7.500 8H15v7l-7.500-1z" /></svg>
      </button>
      <label className="flex w-[322px] shrink-0 items-center bg-[#f2f2f2] pr-[13px] pl-[9px]">
        <svg width="20" height="20"><circle cx="10" cy="10" r="8.500" fill="none" stroke="#111" strokeWidth="2.400" /></svg>
        <input aria-label="Search" placeholder="Type here to search" className="ml-[9px] min-w-0 flex-1 bg-transparent text-[13px] outline-none placeholder:text-[#444]" />
        <svg width="12" height="16" viewBox="0 0 12 16" fill="none" stroke="#333" strokeWidth="1.200"><rect x="3.500" y="0.700" width="5" height="10" rx="1" /><path d="M1 7.500v3q0 2.500 3 2.500h4q3 0 3-2.500v-3M6 13v2.500M3 15.400h6" /></svg>
      </label>
      {APPS.map(([name, bar, icon]) => (
        <button type="button" key={name} aria-label={name} className={"relative flex w-[46px] shrink-0 items-center justify-center " + (name === "Word" ? "bg-[#33343d]" : "")}>
          {icon}
          {bar && <span className={"absolute bottom-0 h-[3px] bg-[#76b0e0] " + bar} />}
        </button>
      ))}
      <div className="ml-auto flex items-center">
        <button type="button" aria-label="People" className="mr-4 flex w-4 justify-center">
          <svg width="15" height="15" viewBox="0 0 15 15" fill="none" stroke="#fff" strokeWidth="1.200"><circle cx="5" cy="7" r="2.300" /><path d="M1 14c0-6 8-6 8 0" /><circle cx="10.500" cy="3" r="2.300" /><path d="M8.500 6.500c3-2 6 0 6 4" /></svg>
        </button>
        <button type="button" aria-label="Hidden icons" className="flex w-5 justify-center"><svg width="12" height="7"><path d="M1 6l5-5 5 5" stroke="#fff" fill="none" strokeWidth="1.200" /></svg></button>
        <button type="button" aria-label="Battery" className="flex w-[26px] justify-center">
          <svg width="15" height="11" viewBox="0 0 15 11" fill="none" stroke="#fff"><path d="M5 2.500h8.500v7H3.500V7M14.500 4.500v3" /><path d="M5 4h7v4H5z" fill="#fff" stroke="none" /><path d="M0.500 2h4v2.500h-4zM1.500 0v2M3.500 0v2M2.500 5v5" /></svg>
        </button>
        <button type="button" aria-label="Network" className="flex w-[22px] justify-center">
          <svg width="13" height="13" viewBox="0 0 13 13" fill="none" stroke="#ddd"><path d="M0.500 12.500C1 5.500 5.500 1 12.500 0.800M3.500 12.500C4 7.500 7.500 4 12.500 4M6.500 12.500c0.300-3 2.500-5.200 6-5.300M9.500 12.500c0.200-1.500 1.200-2.300 3-2.400" strokeWidth="1.300" /></svg>
        </button>
        <button type="button" aria-label="Volume" className="flex w-[22px] justify-center">
          <svg width="16" height="13" viewBox="0 0 16 13" fill="none" stroke="#fff"><path d="M0.500 4.500H3l3-3v10l-3-3H0.500zM8 4.500q1.500 2 0 4M10.500 3q2.500 3.500 0 7M13 1q4 5.500 0 11" /></svg>
        </button>
        <div className="w-[56px] text-center text-[11px] leading-[17px] whitespace-nowrap">9:59 PM<br />28-Jul-20</div>
        <button type="button" aria-label="Notifications" className="relative mr-[10px] ml-[14px] flex h-6 w-6 items-start pt-[3px] pl-[2px]">
          <svg width="15" height="14" viewBox="0 0 15 14"><path d="M0 0h15v11H7l-3 3v-3H0z" fill="#fff" /><path d="M3 3.500h9M3 5.500h9M3 7.500h6" stroke="#333" /></svg>
          <span className="absolute right-0 -bottom-[3px] flex h-4 w-4 items-center justify-center rounded-full border border-[#888] bg-[#333] text-[10px] leading-3 font-semibold">10</span>
        </button>
        <span className="mr-1 h-[37px] w-px bg-[#555]" />
      </div>
    </nav>
  );
}

export default function App() {
  return (
    <div className="flex min-h-screen flex-col bg-[#e6e6e6] font-['Open_Sans','Noto_Sans',sans-serif]">
      <Header />
      <Ribbon />
      <div className="grid h-[23px] shrink-0 grid-cols-[148px_1fr_143px]">
        <button type="button" aria-label="Tab selector" className="mt-[5px] ml-[4px] flex h-[13px] w-[13px] items-center justify-center bg-white">
          <svg width="6" height="6"><path d="M1 0v5h5" stroke="#555" strokeWidth="1.800" fill="none" /></svg>
        </button>
        <HorizontalRuler />
      </div>
      <main className="grid flex-1 grid-cols-[149px_1fr_143px]">
        <VerticalRuler />
        <article className="border-r border-[#c8c8c8] bg-white pt-[30px] font-['Liberation_Serif',serif] text-black">
          <div className="flex items-start pl-[14px]">
            <Circuit />
            <div className="ml-[18px] flex gap-6">
              <Gates />
              <TruthTables />
            </div>
          </div>
          <OutputTable />
        </article>
      </main>
      <StatusBar />
      <Taskbar />
    </div>
  );
}
